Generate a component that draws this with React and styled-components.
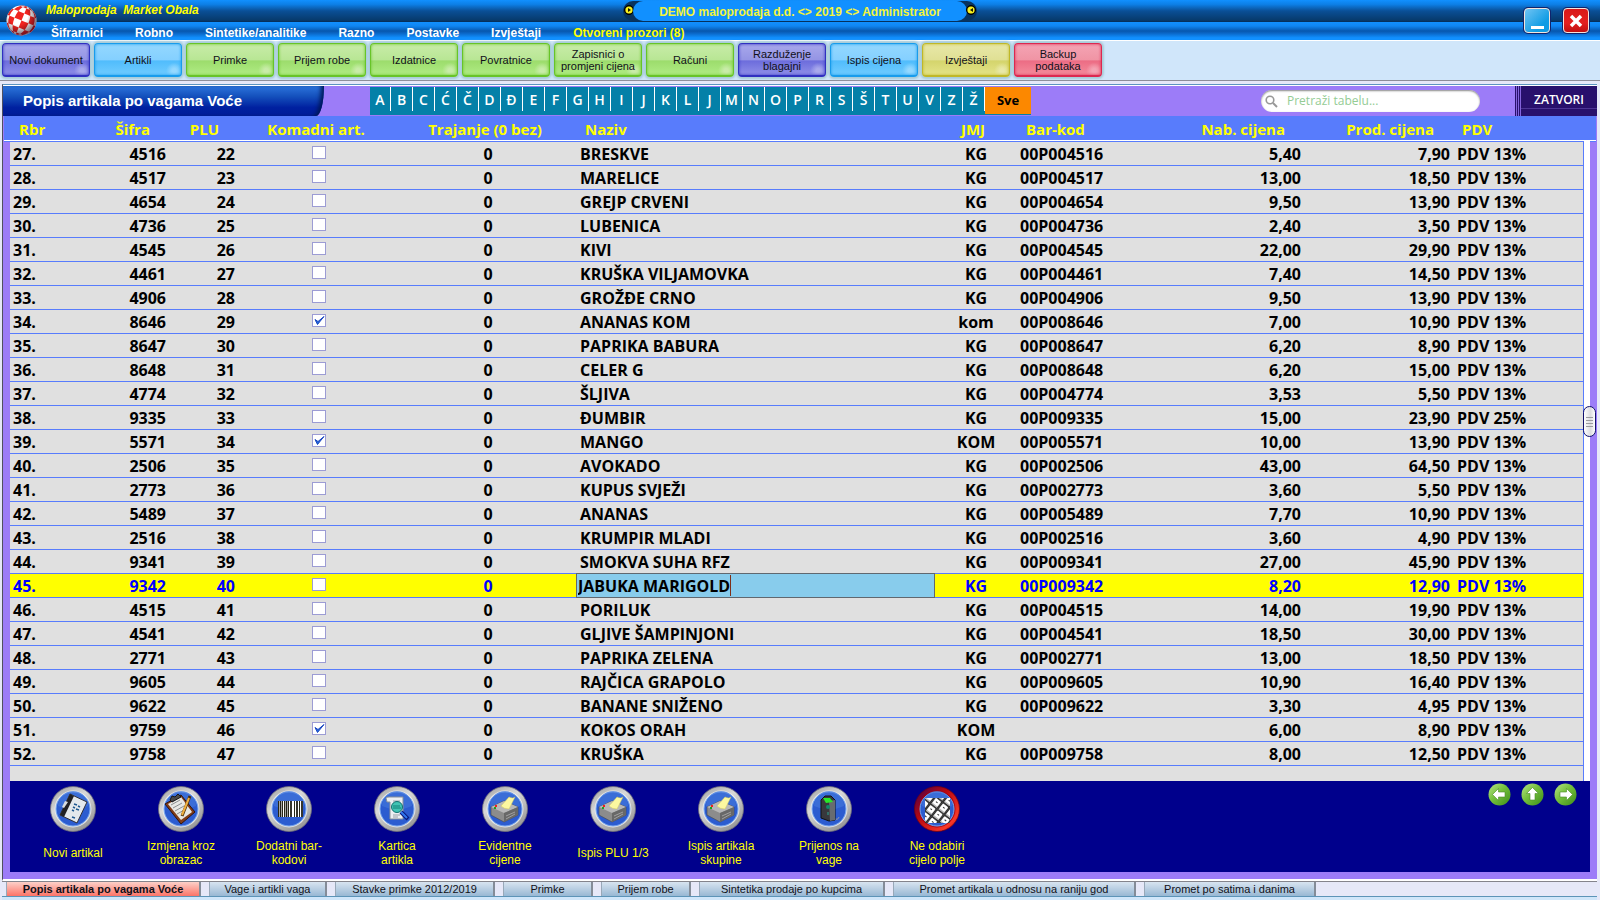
import React, { useState } from "react";
import styled, { createGlobalStyle, css } from "styled-components";

const GlobalStyle = createGlobalStyle`
  * {
    box-sizing: border-box;
  }

  body {
    margin: 0;
    background: #e6e8f8;
    font-family: "Liberation Sans", Arial, sans-serif;
    font-size: 12px;
    color: #000;
  }

  button, input {
    font: inherit;
    color: inherit;
    margin: 0;
  }

  button {
    padding: 0;
    border: 0;
    background: none;
    cursor: pointer;
  }
`;

const uiFont = `"Open Sans", "Noto Sans", sans-serif`;

const Page = styled.div`
  display: flex;
  flex-direction: column;
  min-height: 100vh;
`;

/* ---------- header ---------- */

const Header = styled.header`
  display: grid;
  grid-template-columns: 46px minmax(0, 1fr) 354px minmax(0, 1fr) 46px;
  grid-template-rows: 22px 18px;
  border-bottom: 1px solid #fff;
  background:
    linear-gradient(#1190ff, #0d7fe6 20%, #0a4f96 50%, #073a6c 92%, #052c55) 0 0 / 100% 22px no-repeat,
    linear-gradient(#1190ff, #1086f2 22%, #0757ae 50%, #0a66c6 62%, #1190ff 88%) 0 22px / 100% 18px no-repeat;
`;

const LogoSlot = styled.div`
  grid-column: 1;
  grid-row: 1 / 3;
  padding: 5px 0 0 6px;

  svg { display: block; }
`;

const Brand = styled.div`
  grid-column: 2;
  grid-row: 1;
  line-height: 20px;
  font-weight: bold;
  font-style: italic;
  color: #ff0;
  white-space: pre;
`;

const Badge = styled.div`
  grid-column: 3;
  grid-row: 1;
  display: flex;
  align-items: center;
  justify-content: space-between;
  height: 20px;
  margin-top: 1px;
  border-radius: 10px;
  background: #08335f;

  svg { flex: none; }
`;

const BadgeText = styled.span`
  flex: 1;
  margin: 0 -2px;
  border-radius: 10px;
  background: #1190ff;
  color: #f4f43c;
  font-weight: bold;
  line-height: 22px;
  height: 20px;
  text-align: center;
`;

const Menu = styled.nav`
  grid-column: 2 / 5;
  grid-row: 2;
  display: flex;
  gap: 32px;
  padding-left: 5px;
`;

const MenuLink = styled.a`
  line-height: 23px;
  font-weight: bold;
  text-decoration: none;
  color: ${(props) => (props.$accent ? "#ff0" : "#fff")};
`;

const WindowButtons = styled.div`
  grid-column: 4 / 6;
  grid-row: 1 / 3;
  display: flex;
  justify-content: flex-end;
  align-items: flex-start;
  gap: 13px;
  padding: 8px 11px 0 0;
`;

const WindowButton = styled.button`
  display: grid;
  place-items: center;
  width: 26px;
  height: 25px;
  border: 1px solid #f4e4dc;
  border-radius: 4px;
  box-shadow: 0 0 0 1px #10246c;
  background: ${(props) => (props.$close ? "linear-gradient(#d81818, #e42020 60%, #c01010)" : "linear-gradient(135deg, #70c4f4, #109ce4 70%)")};
`;

/* ---------- main toolbar ---------- */

const Toolbar = styled.div`
  display: flex;
  gap: 4px;
  height: 40px;
  padding: 2px 2px 0;
  border-bottom: 1px solid #8c8c98;
  background: #d0e6fa;
`;

const tones = {
  violet: ["#a8a8ec", "#9494e4", "#6c6cdc", "#9090e8", "#3030c0"],
  blue: ["#94d8ff", "#84d0ff", "#50bcfc", "#70ccff", "#189cec"],
  green: ["#c8eca8", "#b8e694", "#9cdc6c", "#b0ec84", "#68c428"],
  yellow: ["#e8e8a8", "#e0e094", "#d4d46c", "#e4e488", "#c0b828"],
  red: ["#f4a4b4", "#f094a4", "#ec6c84", "#f48c9c", "#dc2850"],
};

const ToolButton = styled.button`
  flex: 0 0 88px;
  height: 34px;
  border: 1px solid ${(props) => tones[props.$tone][4]};
  border-bottom-width: 2px;
  border-radius: 4px;
  box-shadow: 0 0 2px 2px #a8ccd8, inset 0 0 3px ${(props) => tones[props.$tone][4]};
  background: ${(props) => {
    const t = tones[props.$tone];
    return `radial-gradient(circle at 92% 86%, ${t[0]} 0 2px, transparent 8px), linear-gradient(${t[0]}, ${t[1]} 52%, ${t[2]} 54%, ${t[3]})`;
  }};
  font-size: 11px;
  line-height: 12px;
  color: #101018;
  white-space: pre-line;
`;

/* ---------- document panel ---------- */

const Panel = styled.main`
  flex: 1;
  display: flex;
  flex-direction: column;
  margin: 3px 3px 0 2px;
  border-top: 1px solid #5c94c0;
  border-left: 1px solid #505060;
  border-bottom: 2px solid #fff;
  padding-top: 1px;
  background: linear-gradient(#fff 1px, #9c7cf8 1px);
`;

const PanelHead = styled.div`
  display: flex;
  height: 30px;
`;

const PanelTitle = styled.h1`
  flex: 0 0 321px;
  margin: 0 46px 0 0;
  padding-left: 20px;
  border-bottom-right-radius: 8px 30px;
  box-shadow: inset -5px 0 4px -2px #001858;
  background: linear-gradient(#2c74dc, #1450bc 35%, #0020a0 72%, #001c98);
  font-size: 15px;
  line-height: 30px;
  color: #fff;
`;

const Letters = styled.div`
  display: flex;
  align-items: flex-start;
  height: 28px;
  margin-top: 1px;
  background: #0480a8;
  font-family: ${uiFont};
  font-size: 14px;
  font-weight: 600;
`;

const LetterButton = styled.button`
  width: 22px;
  height: 24px;
  border-right: 1px solid #fff;
  color: #fff;

  &:first-child { width: 21px; }
`;

const AllButton = styled.button`
  width: 46px;
  height: 27px;
  padding-bottom: 2px;
  background: #fc8800;
  font-size: 13px;
  font-weight: bold;
`;

const Search = styled.label`
  display: flex;
  align-items: center;
  width: 219px;
  height: 22px;
  margin: 4px 35px 0 auto;
  padding-left: 4px;
  border-radius: 11px;
  background: #fff;
  box-shadow: inset 0 1px 2px #888;

  input {
    width: 170px;
    margin-left: 7px;
    border: 0;
    outline: 0;
    background: none;
    font-family: ${uiFont};
    font-size: 12px;
    line-height: 18px;
  }

  input::placeholder { color: #94cc94; }
`;

const CloseButton = styled.button`
  width: 82px;
  padding: 0 0 4px 6px;
  background:
    linear-gradient(#4c3494, #4c3494) 6px 22px / 100% 1px no-repeat,
    linear-gradient(to right, #28106c 1px, #8464dc 1px 2px, #28106c 2px 3px, #8464dc 3px 4px, #28106c 4px 5px, #8464dc 5px 6px, #28106c 6px);
  font-family: ${uiFont};
  font-weight: 600;
  font-size: 12px;
  color: #fff;
`;

/* ---------- table ---------- */

const TableFrame = styled.div`
  position: relative;
  flex: 1;
  display: flex;
  margin: 0 1px;
  padding: 0 6px;
  background: linear-gradient(#587cfc 24px, #fff 24px 25px, #587cfc 25px 26px, #9c7cf8 26px);
`;

const TableSide = styled.div`
  flex: 1;
  display: flex;
  flex-direction: column;
  min-width: 0;

  &::after {
    content: "";
    flex: 1 0 15px;
    background: #e0e0e0;
  }
`;

const Track = styled.div`
  width: 7px;
  margin-top: 25px;
  border-left: 1px solid #587cfc;
  background: #fff;
`;

const Thumb = styled.div`
  position: absolute;
  top: 290px;
  right: 0;
  display: grid;
  place-content: center;
  gap: 2px;
  width: 13px;
  height: 31px;
  border: 1px solid #10106c;
  border-radius: 7px;
  background: linear-gradient(to right, #fff, #dcdce0 60%, #fff);

  i {
    width: 7px;
    height: 1px;
    background: #9c9ca0;
  }
`;

const Table = styled.table`
  width: 100%;
  table-layout: fixed;
  border-spacing: 0;
  font-family: ${uiFont};
  font-size: 16px;
  font-weight: bold;
`;

const Col = styled.col`
  width: ${(props) => (props.$w ? props.$w + "px" : "auto")};
`;

const Th = styled.th`
  height: 26px;
  padding: 0 ${(props) => (props.$align === "right" ? 19 : props.$align === "center" ? 6 : 0)}px 1px ${(props) => (props.$align ? 0 : 9)}px;
  text-align: ${(props) => props.$align || "left"};
  font-size: 15px;
  line-height: 22px;
  color: #ff0;
  white-space: nowrap;
`;

const Row = styled.tr`
  background: ${(props) => (props.$active ? "#ff0" : "#e0e0e0")};
  color: ${(props) => (props.$active ? "#00f" : "#000")};
`;

const Td = styled.td`
  height: 24px;
  padding: ${(props) => (props.$flush ? "0" : "2px 3px 0")};
  border-bottom: 1px solid #587cfc;
  text-align: ${(props) => props.$align || "left"};
  line-height: 21px;
  white-space: nowrap;
  ${(props) => props.$name && css`padding-left: 4px;`}
`;

const TickBox = styled.span`
  display: grid;
  width: 14px;
  height: 13px;
  margin: 0 auto 2px;

  input, svg { grid-area: 1 / 1; }

  input {
    appearance: none;
    width: 14px;
    height: 13px;
    border: 1px solid #9c9cd4;
    background: #fff;
  }

  svg { position: relative; pointer-events: none; }
`;

const EditBox = styled.div`
  display: flex;
  align-items: center;
  height: 25px;
  margin: -1px 0;
  padding-left: 1px;
  border: 1px solid #606870;
  background: #88ccec;
  color: #000;

  input {
    field-sizing: content;
    padding: 2px 0 0;
    border: 0;
    outline: 0;
    background: none;
    line-height: 21px;
  }
`;

const Caret = styled.span`
  width: 1px;
  height: 21px;
  background: #803018;
`;

/* ---------- bottom actions and tabs ---------- */

const ActionBar = styled.div`
  display: flex;
  height: 91px;
  margin: 0 7px 7px;
  padding: 5px 13px 0 9px;
  background: #00008c;
`;

const Action = styled.button`
  display: flex;
  flex-direction: column;
  align-items: center;
  width: 108px;
  color: #ff0;

  svg { display: block; }
`;

const ActionLabel = styled.span`
  display: grid;
  place-items: center;
  min-height: 32px;
  margin-top: 5px;
  line-height: 14px;
  white-space: pre-line;
`;

const Arrows = styled.div`
  display: flex;
  align-items: flex-start;
  gap: 10px;
  margin: -3px 0 0 auto;

  svg { display: block; }
`;

const Tabs = styled.nav`
  display: flex;
  gap: 8px;
  height: 16px;
  margin: 0 3px 3px 2px;
  padding-left: 4px;
  border-top: 1px solid #84848c;
  border-bottom: 1px solid #5c94b8;
  box-shadow: 0 3px 0 #d0e6fa;
`;

const Tab = styled.a`
  width: ${(props) => props.$w}px;
  overflow: hidden;
  border-left: 1px solid #98a8b8;
  border-right: 2px solid #848c98;
  background: ${(props) => (props.$current ? "linear-gradient(#fcd0c8, #fc7468)" : "linear-gradient(#d8e4f0, #98b8d4)")};
  font-size: 11px;
  font-weight: ${(props) => (props.$current ? "bold" : "normal")};
  line-height: 14px;
  text-align: center;
  text-decoration: none;
  white-space: nowrap;
  color: #101018;
`;

/* ---------- drawings ---------- */

// point on the front of the ball, angles in degrees
const onBall = (lon, lat) => {
  const a = (lon * Math.PI) / 180;
  const b = (lat * Math.PI) / 180;
  return (15 * Math.cos(b) * Math.sin(a)).toFixed(2) + " " + (15 * Math.sin(b)).toFixed(2);
};

const ballPatches = [];
for (let i = 0; i < 6; i++) {
  for (let j = 0; j < 6; j++) {
    if ((i + j) % 2) continue;
    const lon = -90 + i * 30;
    const lat = -90 + j * 30;
    ballPatches.push("M" + [[lon, lat], [lon + 15, lat], [lon + 30, lat], [lon + 30, lat + 15], [lon + 30, lat + 30], [lon + 15, lat + 30], [lon, lat + 30], [lon, lat + 15]].map((p) => onBall(p[0], p[1])).join("L") + "z");
  }
}

const Logo = () => (
  <svg width="31" height="31" viewBox="-15.500 -15.500 31 31">
    <defs>
      <radialGradient id="ballShade" cx=".4" cy=".35" r=".68">
        <stop offset=".45" stopColor="#000" stopOpacity="0" />
        <stop offset="1" stopColor="#200020" stopOpacity=".65" />
      </radialGradient>
    </defs>
    <circle r="15" fill="#fff" />
    <path d={ballPatches.join("")} fill="#f02420" transform="rotate(22)" />
    <circle r="15" fill="url(#ballShade)" />
  </svg>
);

const BadgeDot = ({ flip }) => (
  <svg width="12" height="20" viewBox="0 0 12 20">
    <circle cx="6" cy="9" r="4.500" fill="#101800" stroke="#000" />
    <circle cx="6" cy="9" r="3.600" fill="#f8f020" />
    <path d={flip ? "M8 7v4l-3-2z" : "M5 7v4l3-2z"} fill="#181800" />
  </svg>
);

const Orb = ({ red, children }) => (
  <svg width="46" height="46" viewBox="0 0 46 46">
    <defs>
      <linearGradient id="ringGrey" x1=".2" y1="0" x2=".8" y2="1">
        <stop offset="0" stopColor="#a8a8a8" />
        <stop offset=".35" stopColor="#d8d8d8" />
        <stop offset="1" stopColor="#909090" />
      </linearGradient>
      <linearGradient id="ringRed" x1="0" y1="0" x2="1" y2="1">
        <stop offset="0" stopColor="#400050" />
        <stop offset=".4" stopColor="#b80810" />
        <stop offset=".8" stopColor="#f83828" />
        <stop offset="1" stopColor="#c00808" />
      </linearGradient>
    </defs>
    <circle cx="23" cy="23" r="22.500" fill={red ? "url(#ringRed)" : "url(#ringGrey)"} stroke={red ? "#700010" : "#707078"} strokeWidth=".8" />
    <circle cx="23" cy="23" r="18.500" fill={red ? "#a00010" : "#f0f0f0"} opacity=".8" />
    <circle cx="23" cy="23" r="17" fill="#2c5cd0" stroke="#78a8f0" />
    <path d="M8 20a15 15 0 0 1 30 0q-15 7-30 0z" fill="#4478dc" opacity=".6" />
    {children}
  </svg>
);

const Notebook = () => (
  <g>
    <path d="M20 8l17 8-10 21-17-8z" fill="#e4e8ec" stroke="#303038" />
    <path d="M20 8l4 2-10 21-4-2z" fill="#202024" />
    <path d="M15 15l-3 6 2 1 4-6z" fill="#d8dce0" />
    <path d="M24 18l3 1m1 1l2 1m-7 0l2 1m1 1l3 1m-7 0l2 1m-2 6l3 1" stroke="#205890" strokeWidth="1.500" />
  </g>
);

const Clipboard = () => (
  <g>
    <path d="M7 18l16-9 14 17-14 12z" fill="#803c18" stroke="#30140c" />
    <path d="M10 18l13-7 11 15-11 8z" fill="#e8e8e4" />
    <path d="M13 19l9-5m-7 8l9-5m-7 8l9-5m-7 8l9-5" stroke="#8c9090" />
    <path d="M12 14l2-4 3 1 3-3 3 3-9 5z" fill="#484848" stroke="#181818" />
    <path d="M32 10L24 30" stroke="#503008" strokeWidth="3" />
    <path d="M31 12l-7 17" stroke="#f0b040" strokeWidth="2" />
  </g>
);

const Barcode = () => (
  <g>
    <path d="M12 15h25v16H12z" fill="#fff" />
    <path d="M12.500 15v16M16.500 15v16M18.500 15v16M22.500 15v16M28.500 15v16M33.500 15v16" stroke="#282818" />
    <path d="M14.500 15v16M20.500 15v16M25 15v16M31 15v16M36 15v16" stroke="#202018" strokeWidth="1.800" />
  </g>
);

const PageLens = () => (
  <g>
    <path d="M12 12q0-1 3-1h14v22H16V16h-3z" fill="#eceff2" stroke="#889098" />
    <path d="M19 15h7m-7 14h7m-7 2h5" stroke="#98a0a8" />
    <path d="M27 26l7 7" stroke="#08187c" strokeWidth="4" />
    <path d="M27 26l6 6" stroke="#3078f0" strokeWidth="2" />
    <circle cx="23" cy="21" r="5.500" fill="#40c4b4" stroke="#107070" />
    <path d="M19 20h7m-7 2h8" stroke="#108078" />
  </g>
);

const Printer = () => (
  <g>
    <path d="M9 21l13-6 14 6v8l-14 7-13-7z" fill="#8c8c8c" stroke="#484848" strokeWidth=".6" />
    <path d="M9 21l13-6 14 6-14 6z" fill="#b8b8b8" />
    <path d="M22 27l14-6v8l-14 7z" fill="#686868" />
    <path d="M24 30l9-4m-9 7l9-5" stroke="#a0a0a0" />
    <path d="M19 20l8-9q4 2 6 0l-6 12q-5 0-8-3z" fill="#fcf8a0" stroke="#d0c860" strokeWidth=".5" />
    <path d="M13 20h2" stroke="#f02020" strokeWidth="2" />
    <path d="M12 22h2" stroke="#20a020" strokeWidth="2" />
  </g>
);

const Device = () => (
  <g>
    <path d="M27 32q5 3 6-1" fill="none" stroke="#9098a8" />
    <path d="M15 14l4-4h6l4 4v20l-6 1-8-3z" fill="#38383c" stroke="#101010" />
    <path d="M23 15l6-1v20l-5 1z" fill="#686c70" />
    <path d="M17 12h7l3 4-7 1z" fill="#28e828" />
    <circle cx="22" cy="21" r="2" fill="#108868" />
    <path d="M22 26v3" stroke="#28a890" />
  </g>
);

const Keys = () => (
  <g>
    <clipPath id="keyArea"><path d="M11 12h25v25H11z" /></clipPath>
    <g clipPath="url(#keyArea)">
      <path d="M11 12h25v25H11z" fill="#808080" />
      <g transform="rotate(38 23 24)">
        {[0, 1, 2, 3].map((row) => [0, 1, 2, 3].map((col) => (
          <g key={row + "-" + col} transform={`translate(${5 + col * 9} ${6 + row * 9})`}>
            <path d="M0 0h8v8H0z" fill="#b8b8b8" stroke="#282828" />
            <path d="M1 0h6v6H1z" fill="#fff" />
            <path d="M3 3h2" stroke="#303030" />
          </g>
        )))}
      </g>
    </g>
  </g>
);

const Arrow = ({ turn }) => (
  <svg width="23" height="23" viewBox="0 0 23 23">
    <defs>
      <linearGradient id="leaf" x1="0" y1="0" x2="1" y2="1">
        <stop offset="0" stopColor="#b8e488" />
        <stop offset=".45" stopColor="#74c03c" />
        <stop offset="1" stopColor="#3c8c18" />
      </linearGradient>
    </defs>
    <circle cx="11.500" cy="11.500" r="11" fill="url(#leaf)" />
    <path d="M4.500 11.500l6-6v3.500h6.500v5h-6.500v3.500z" fill="#fff" stroke="#4c8c28" strokeWidth=".6" transform={`rotate(${turn} 11.500 11.500)`} />
  </svg>
);

const Tick = () => (
  <svg width="14" height="13" viewBox="0 0 14 13">
    <path d="M3 5.500l2.500 5L12 2.500 6 7.500z" fill="#2068e0" stroke="#1c48c0" strokeWidth="1" />
  </svg>
);

/* ---------- data ---------- */

const menu = ["Šifrarnici", "Robno", "Sintetike/analitike", "Razno", "Postavke", "Izvještaji"];

const tools = [
  ["Novi dokument", "violet"],
  ["Artikli", "blue"],
  ["Primke", "green"],
  ["Prijem robe", "green"],
  ["Izdatnice", "green"],
  ["Povratnice", "green"],
  ["Zapisnici o\npromjeni cijena", "green"],
  ["Računi", "green"],
  ["Razduženje\nblagajni", "violet"],
  ["Ispis cijena", "blue"],
  ["Izvještaji", "yellow"],
  ["Backup\npodataka", "red"],
];

const letters = "ABCĆČDĐEFGHIJKLJMNOPRSŠTUVZŽ".split("");

const columns = [
  { label: "Rbr", w: 50 },
  { label: "Šifra", w: 109, align: "right" },
  { label: "PLU", w: 69, align: "right" },
  { label: "Komadni art.", w: 162, align: "center" },
  { label: "Trajanje (0 bez)", w: 176, align: "center" },
  { label: "Naziv" },
  { label: "JMJ", w: 82, align: "center" },
  { label: "Bar-kod", w: 123 },
  { label: "Nab. cijena", w: 164, align: "right" },
  { label: "Prod. cijena", w: 149, align: "right" },
  { label: "PDV", w: 130 },
];

// sifra, naziv, jmj, nabavna, prodajna
const items = [
  ["4516", "BRESKVE", "KG", "5,40", "7,90"],
  ["4517", "MARELICE", "KG", "13,00", "18,50"],
  ["4654", "GREJP CRVENI", "KG", "9,50", "13,90"],
  ["4736", "LUBENICA", "KG", "2,40", "3,50"],
  ["4545", "KIVI", "KG", "22,00", "29,90"],
  ["4461", "KRUŠKA VILJAMOVKA", "KG", "7,40", "14,50"],
  ["4906", "GROŽĐE CRNO", "KG", "9,50", "13,90"],
  ["8646", "ANANAS KOM", "kom", "7,00", "10,90"],
  ["8647", "PAPRIKA BABURA", "KG", "6,20", "8,90"],
  ["8648", "CELER G", "KG", "6,20", "15,00"],
  ["4774", "ŠLJIVA", "KG", "3,53", "5,50"],
  ["9335", "ĐUMBIR", "KG", "15,00", "23,90"],
  ["5571", "MANGO", "KOM", "10,00", "13,90"],
  ["2506", "AVOKADO", "KG", "43,00", "64,50"],
  ["2773", "KUPUS SVJEŽI", "KG", "3,60", "5,50"],
  ["5489", "ANANAS", "KG", "7,70", "10,90"],
  ["2516", "KRUMPIR MLADI", "KG", "3,60", "4,90"],
  ["9341", "SMOKVA SUHA RFZ", "KG", "27,00", "45,90"],
  ["9342", "JABUKA MARIGOLD", "KG", "8,20", "12,90"],
  ["4515", "PORILUK", "KG", "14,00", "19,90"],
  ["4541", "GLJIVE ŠAMPINJONI", "KG", "18,50", "30,00"],
  ["2771", "PAPRIKA ZELENA", "KG", "13,00", "18,50"],
  ["9605", "RAJČICA GRAPOLO", "KG", "10,90", "16,40"],
  ["9622", "BANANE SNIŽENO", "KG", "3,30", "4,95"],
  ["9759", "KOKOS ORAH", "KOM", "6,00", "8,90"],
  ["9758", "KRUŠKA", "KG", "8,00", "12,50"],
];

const actions = [
  ["Novi artikal", Notebook],
  ["Izmjena kroz\nobrazac", Clipboard],
  ["Dodatni bar-\nkodovi", Barcode],
  ["Kartica\nartikla", PageLens],
  ["Evidentne\ncijene", Printer],
  ["Ispis PLU 1/3", Printer],
  ["Ispis artikala\nskupine", Printer],
  ["Prijenos na\nvage", Device],
  ["Ne odabiri\ncijelo polje", Keys],
];

const tabs = [
  ["Popis artikala po vagama Voće", 195],
  ["Vage i artikli vaga", 118],
  ["Stavke primke 2012/2019", 160],
  ["Primke", 90],
  ["Prijem robe", 90],
  ["Sintetika prodaje po kupcima", 186],
  ["Promet artikala u odnosu na raniju god", 243],
  ["Promet po satima i danima", 172],
];

const ACTIVE = "9342";

const ItemRow = ({ item, index }) => {
  const [sifra, naziv, jmj, nab, prod] = item;
  const active = sifra === ACTIVE;
  const [name, setName] = useState(naziv);
  const [piece, setPiece] = useState(["8646", "5571", "9759"].includes(sifra));

  return (
    <Row $active={active}>
      <Td>{index + 27}.</Td>
      <Td $align="right">{sifra}</Td>
      <Td $align="right">{index + 22}</Td>
      <Td $flush>
        <TickBox>
          <input type="checkbox" aria-label={"Komadni art. " + naziv} checked={piece} onChange={(e) => setPiece(e.target.checked)} />
          {piece && <Tick />}
        </TickBox>
      </Td>
      <Td $align="center">0</Td>
      {active ? (
        <Td $flush>
          <EditBox>
            <input type="text" aria-label="Naziv" value={name} onChange={(e) => setName(e.target.value)} />
            <Caret />
          </EditBox>
        </Td>
      ) : (
        <Td $name>{naziv}</Td>
      )}
      <Td $align="center">{jmj}</Td>
      <Td>{sifra === "9759" ? "" : "00P00" + sifra}</Td>
      <Td $align="right">{nab}</Td>
      <Td $align="right">{prod}</Td>
      <Td $name>{sifra === "9335" ? "PDV 25%" : "PDV 13%"}</Td>
    </Row>
  );
};

const App = () => (
  <Page>
    <GlobalStyle />
    <Header>
      <LogoSlot><Logo /></LogoSlot>
      <Brand>{"Maloprodaja  Market Obala"}</Brand>
      <Badge>
        <BadgeDot />
        <BadgeText>{"DEMO maloprodaja d.d. <> 2019 <> Administrator"}</BadgeText>
        <BadgeDot flip />
      </Badge>
      <Menu>
        {menu.map((label) => <MenuLink href="#" key={label}>{label}</MenuLink>)}
        <MenuLink href="#" $accent>Otvoreni prozori (8)</MenuLink>
      </Menu>
      <WindowButtons>
        <WindowButton aria-label="Minimiziraj">
          <svg width="22" height="22"><path d="M5 17.500h13" stroke="#fff" strokeWidth="3" /></svg>
        </WindowButton>
        <WindowButton $close aria-label="Zatvori program">
          <svg width="22" height="22"><path d="M6 6l10 10M16 6L6 16" stroke="#fff" strokeWidth="3.500" /></svg>
        </WindowButton>
      </WindowButtons>
    </Header>

    <Toolbar>
      {tools.map(([label, tone]) => <ToolButton key={label} $tone={tone}>{label}</ToolButton>)}
    </Toolbar>

    <Panel>
      <PanelHead>
        <PanelTitle>Popis artikala po vagama Voće</PanelTitle>
        <Letters>
          {letters.map((letter, idx) => <LetterButton key={idx}>{letter}</LetterButton>)}
          <AllButton>Sve</AllButton>
        </Letters>
        <Search>
          <svg width="13" height="13" viewBox="0 0 13 13" fill="none" stroke="#989898">
            <circle cx="5" cy="5" r="3.800" strokeWidth="1.600" />
            <path d="M8 8l4 4" strokeWidth="2" />
          </svg>
          <input type="text" aria-label="Pretraži tabelu" placeholder="Pretraži tabelu..." />
        </Search>
        <CloseButton>ZATVORI</CloseButton>
      </PanelHead>

      <TableFrame>
        <TableSide>
          <Table>
            <colgroup>
              {columns.map((col) => <Col key={col.label} $w={col.w} />)}
            </colgroup>
            <thead>
              <tr>
                {columns.map((col) => <Th key={col.label} $align={col.align}>{col.label}</Th>)}
              </tr>
            </thead>
            <tbody>
              {items.map((item, idx) => <ItemRow key={item[0]} item={item} index={idx} />)}
            </tbody>
          </Table>
        </TableSide>
        <Track />
        <Thumb><i /><i /><i /><i /></Thumb>
      </TableFrame>

      <ActionBar>
        {actions.map(([label, Icon]) => (
          <Action key={label}>
            <Orb red={Icon === Keys}><Icon /></Orb>
            <ActionLabel>{label}</ActionLabel>
          </Action>
        ))}
        <Arrows>
          <button aria-label="Natrag"><Arrow turn={0} /></button>
          <button aria-label="Gore"><Arrow turn={90} /></button>
          <button aria-label="Naprijed"><Arrow turn={180} /></button>
        </Arrows>
      </ActionBar>
    </Panel>

    <Tabs>
      {tabs.map(([label, w], idx) => <Tab href="#" key={label} $w={w} $current={idx === 0}>{label}</Tab>)}
    </Tabs>
  </Page>
);

export default App;
